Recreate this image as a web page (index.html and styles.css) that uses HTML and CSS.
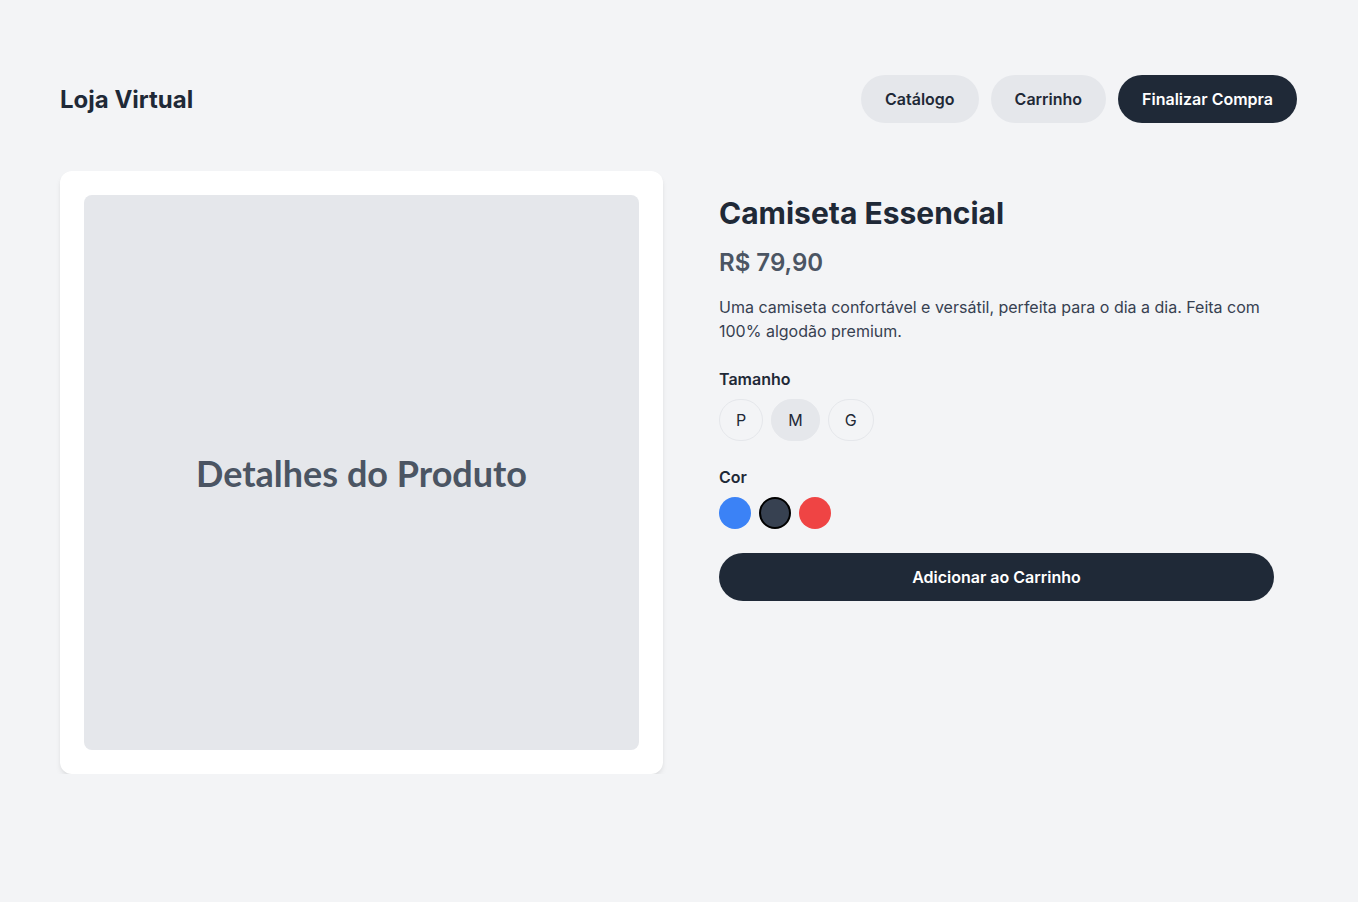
FILE: index.html
```html
<!DOCTYPE html>
<html lang="pt-BR">
<head>
<meta charset="utf-8">
<title>Loja Virtual</title>
<link rel="stylesheet" href="styles.css">
</head>
<body>
<div class="page">
  <header class="header">
    <h1 class="logo">Loja Virtual</h1>
    <nav class="nav">
      <button class="nav-btn">Catálogo</button>
      <button class="nav-btn">Carrinho</button>
      <button class="nav-btn nav-btn-primary">Finalizar Compra</button>
    </nav>
  </header>
  <main class="product">
    <div class="image-card">
      <div class="image-box">Detalhes do Produto</div>
    </div>
    <section class="info">
      <h2 class="title">Camiseta Essencial</h2>
      <div class="price">R$ 79,90</div>
      <p class="desc">Uma camiseta confortável e versátil, perfeita para o dia a dia. Feita com 100% algodão premium.</p>
      <div class="label">Tamanho</div>
      <div class="sizes">
        <button class="size">P</button>
        <button class="size size-active">M</button>
        <button class="size">G</button>
      </div>
      <div class="label">Cor</div>
      <div class="colors">
        <span class="swatch swatch-blue"></span>
        <span class="swatch swatch-dark"></span>
        <span class="swatch swatch-red"></span>
      </div>
      <button class="add-btn">Adicionar ao Carrinho</button>
    </section>
  </main>
</div>
</body>
</html>
```

FILE: styles.css
```css
* { box-sizing: border-box; }
html, body { margin: 0; padding: 0; }
body {
  background: #f3f4f6;
  font-family: Inter, "Liberation Sans", sans-serif;
  color: #1f2937;
}
.page {
  padding: 75px 60px 0;
}
.header {
  display: flex;
  align-items: center;
  justify-content: space-between;
  height: 48px;
}
.logo {
  margin: 0;
  font-size: 24px;
  font-weight: 700;
  color: #1f2937;
}
.nav {
  display: flex;
  gap: 12px;
  margin-right: 1px;
}
.nav-btn {
  height: 48px;
  padding: 0 24px;
  border: none;
  border-radius: 24px;
  background: #e5e7eb;
  color: #1f2937;
  font-family: inherit;
  font-size: 16px;
  font-weight: 600;
}
.nav-btn-primary {
  background: #1f2937;
  color: #fff;
}
.product {
  display: grid;
  grid-template-columns: 1fr 1fr;
  gap: 32px;
  margin-top: 48px;
  align-items: start;
}
.image-card {
  background: #fff;
  border-radius: 12px;
  padding: 24px;
  box-shadow: 0 4px 6px -1px rgba(0,0,0,0.08), 0 2px 4px -1px rgba(0,0,0,0.05);
}
.image-box {
  aspect-ratio: 1 / 1;
  background: #e5e7eb;
  border-radius: 8px;
  display: flex;
  align-items: center;
  justify-content: center;
  font-family: Lato, "Liberation Sans", sans-serif;
  font-weight: 700;
  font-size: 36px;
  color: #4b5563;
}
.info {
  padding: 24px;
}
.title {
  margin: 0 0 16px;
  font-size: 30px;
  line-height: 36px;
  font-weight: 700;
  color: #1f2937;
}
.price {
  font-size: 24px;
  line-height: 32px;
  font-weight: 600;
  color: #4b5563;
  margin-bottom: 16px;
}
.desc {
  margin: 0 0 24px;
  font-size: 16px;
  line-height: 24px;
  color: #374151;
}
.label {
  font-size: 16px;
  line-height: 24px;
  font-weight: 600;
  color: #1f2937;
  margin-bottom: 8px;
}
.sizes {
  display: flex;
  gap: 8px;
  margin-bottom: 24px;
}
.size {
  height: 42px;
  padding: 0 16px;
  border: 1px solid #e5e7eb;
  border-radius: 21px;
  background: transparent;
  font-family: inherit;
  font-size: 16px;
  color: #1f2937;
}
.size-active {
  background: #e5e7eb;
}
.colors {
  display: flex;
  gap: 8px;
  margin-bottom: 24px;
}
.swatch {
  width: 32px;
  height: 32px;
  border-radius: 50%;
  display: block;
}
.swatch-blue { background: #3b82f6; }
.swatch-dark { background: #374151; border: 2px solid #000; }
.swatch-red { background: #ef4444; }
.add-btn {
  display: block;
  width: 100%;
  height: 48px;
  border: none;
  border-radius: 24px;
  background: #1f2937;
  color: #fff;
  font-family: inherit;
  font-size: 16px;
  font-weight: 600;
}
```
